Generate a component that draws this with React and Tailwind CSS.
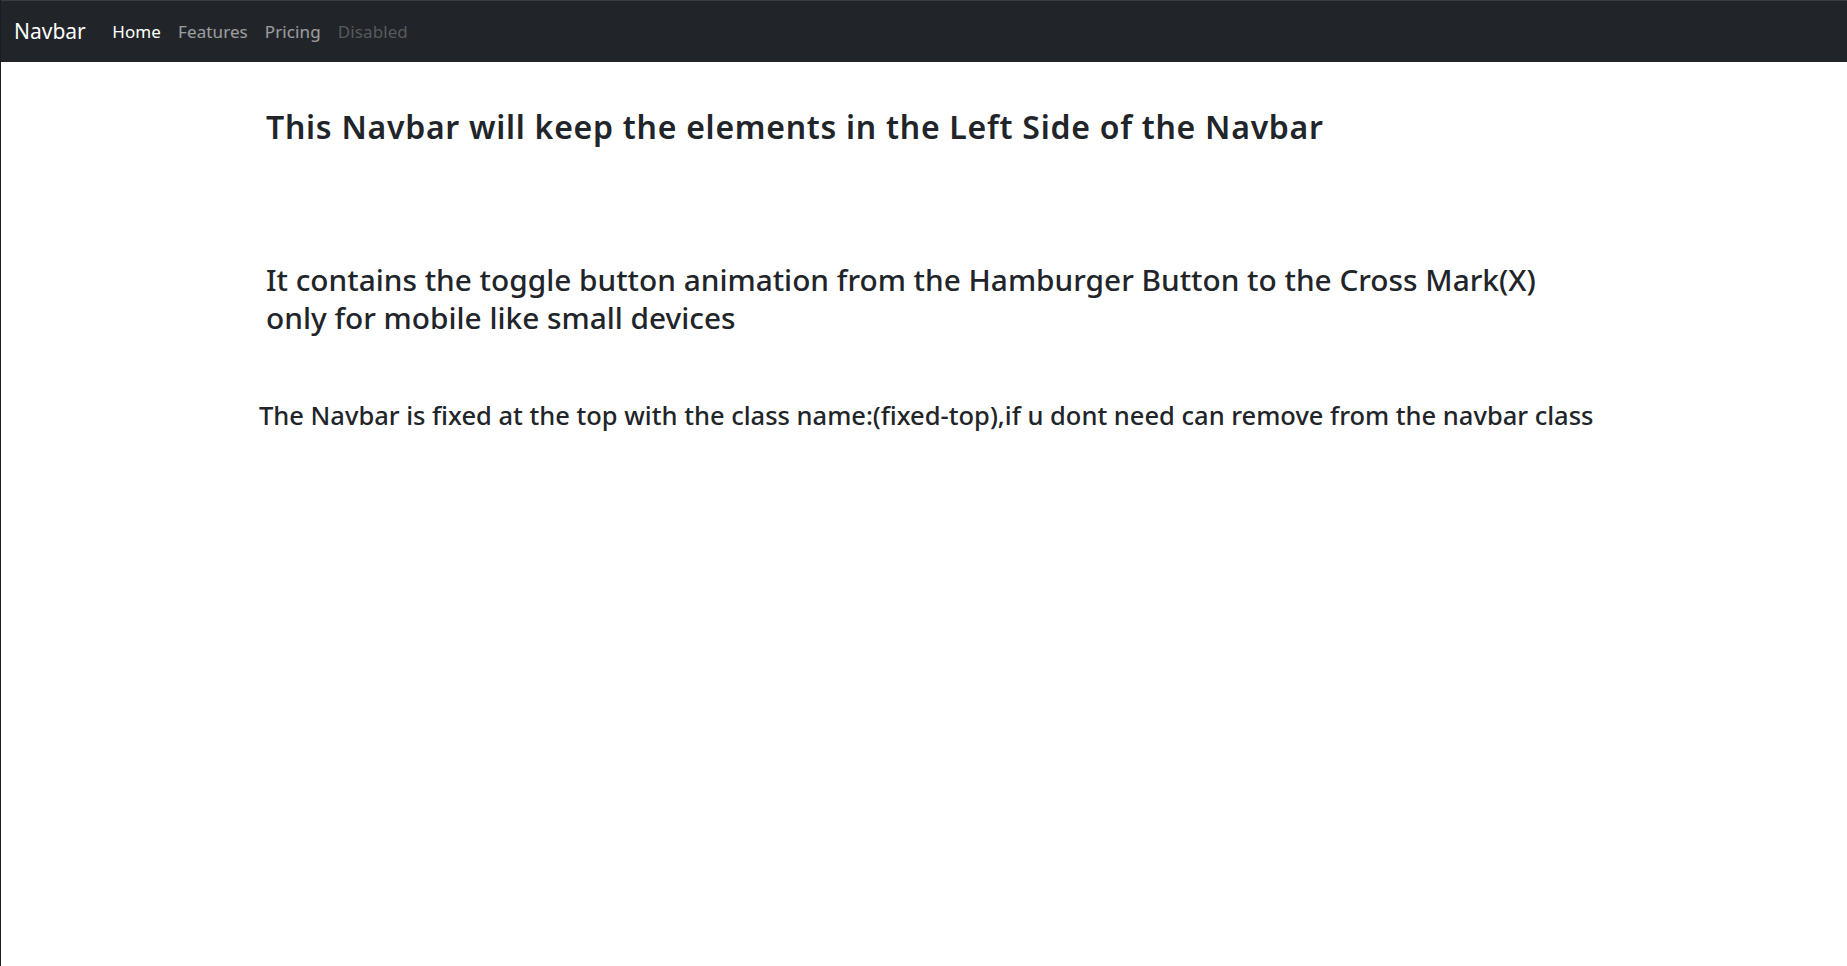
export default function App() {
    const links = [
        { name: "Home", cls: "text-white" },
        { name: "Features", cls: "text-white/55" },
        { name: "Pricing", cls: "text-white/55" },
        { name: "Disabled", cls: "text-white/25" },
    ];

    return (
        <div className="min-h-[966px] bg-white border-l border-[#1c1c1c] text-[#212529] font-['Noto_Sans',sans-serif]">
            <nav className="h-[62px] bg-[#212529] border-t border-[#3a3c3f] flex items-center pl-[13px]">
                <a className="text-white text-[21px] mr-[18px]">Navbar</a>
                <ul className="flex items-center text-[17px] tracking-[0.1px]">
                    {links.map((link) => (
                        <li key={link.name} className={"px-[8.5px] " + link.cls}>
                            {link.name}
                        </li>
                    ))}
                </ul>
            </nav>

            <div className="pl-[265px]">
                <h2 className="text-[32px] font-semibold tracking-[0.72px] leading-[1.2] mt-[46px]">
                    This Navbar will keep the elements in the Left Side of the Navbar
                </h2>
                <h2 className="text-[29.8px] font-medium leading-[38px] mt-[115px]">
                    It contains the toggle button animation from the Hamburger Button to the Cross Mark(X)
                    <br />
                    only for mobile like small devices
                </h2>
            </div>

            <h4 className="pl-[258px] text-[25.5px] font-medium leading-[1.2] mt-[63px]">
                The Navbar is fixed at the top with the class name:(fixed-top),if u dont need can remove from the navbar class
            </h4>
        </div>
    );
}
